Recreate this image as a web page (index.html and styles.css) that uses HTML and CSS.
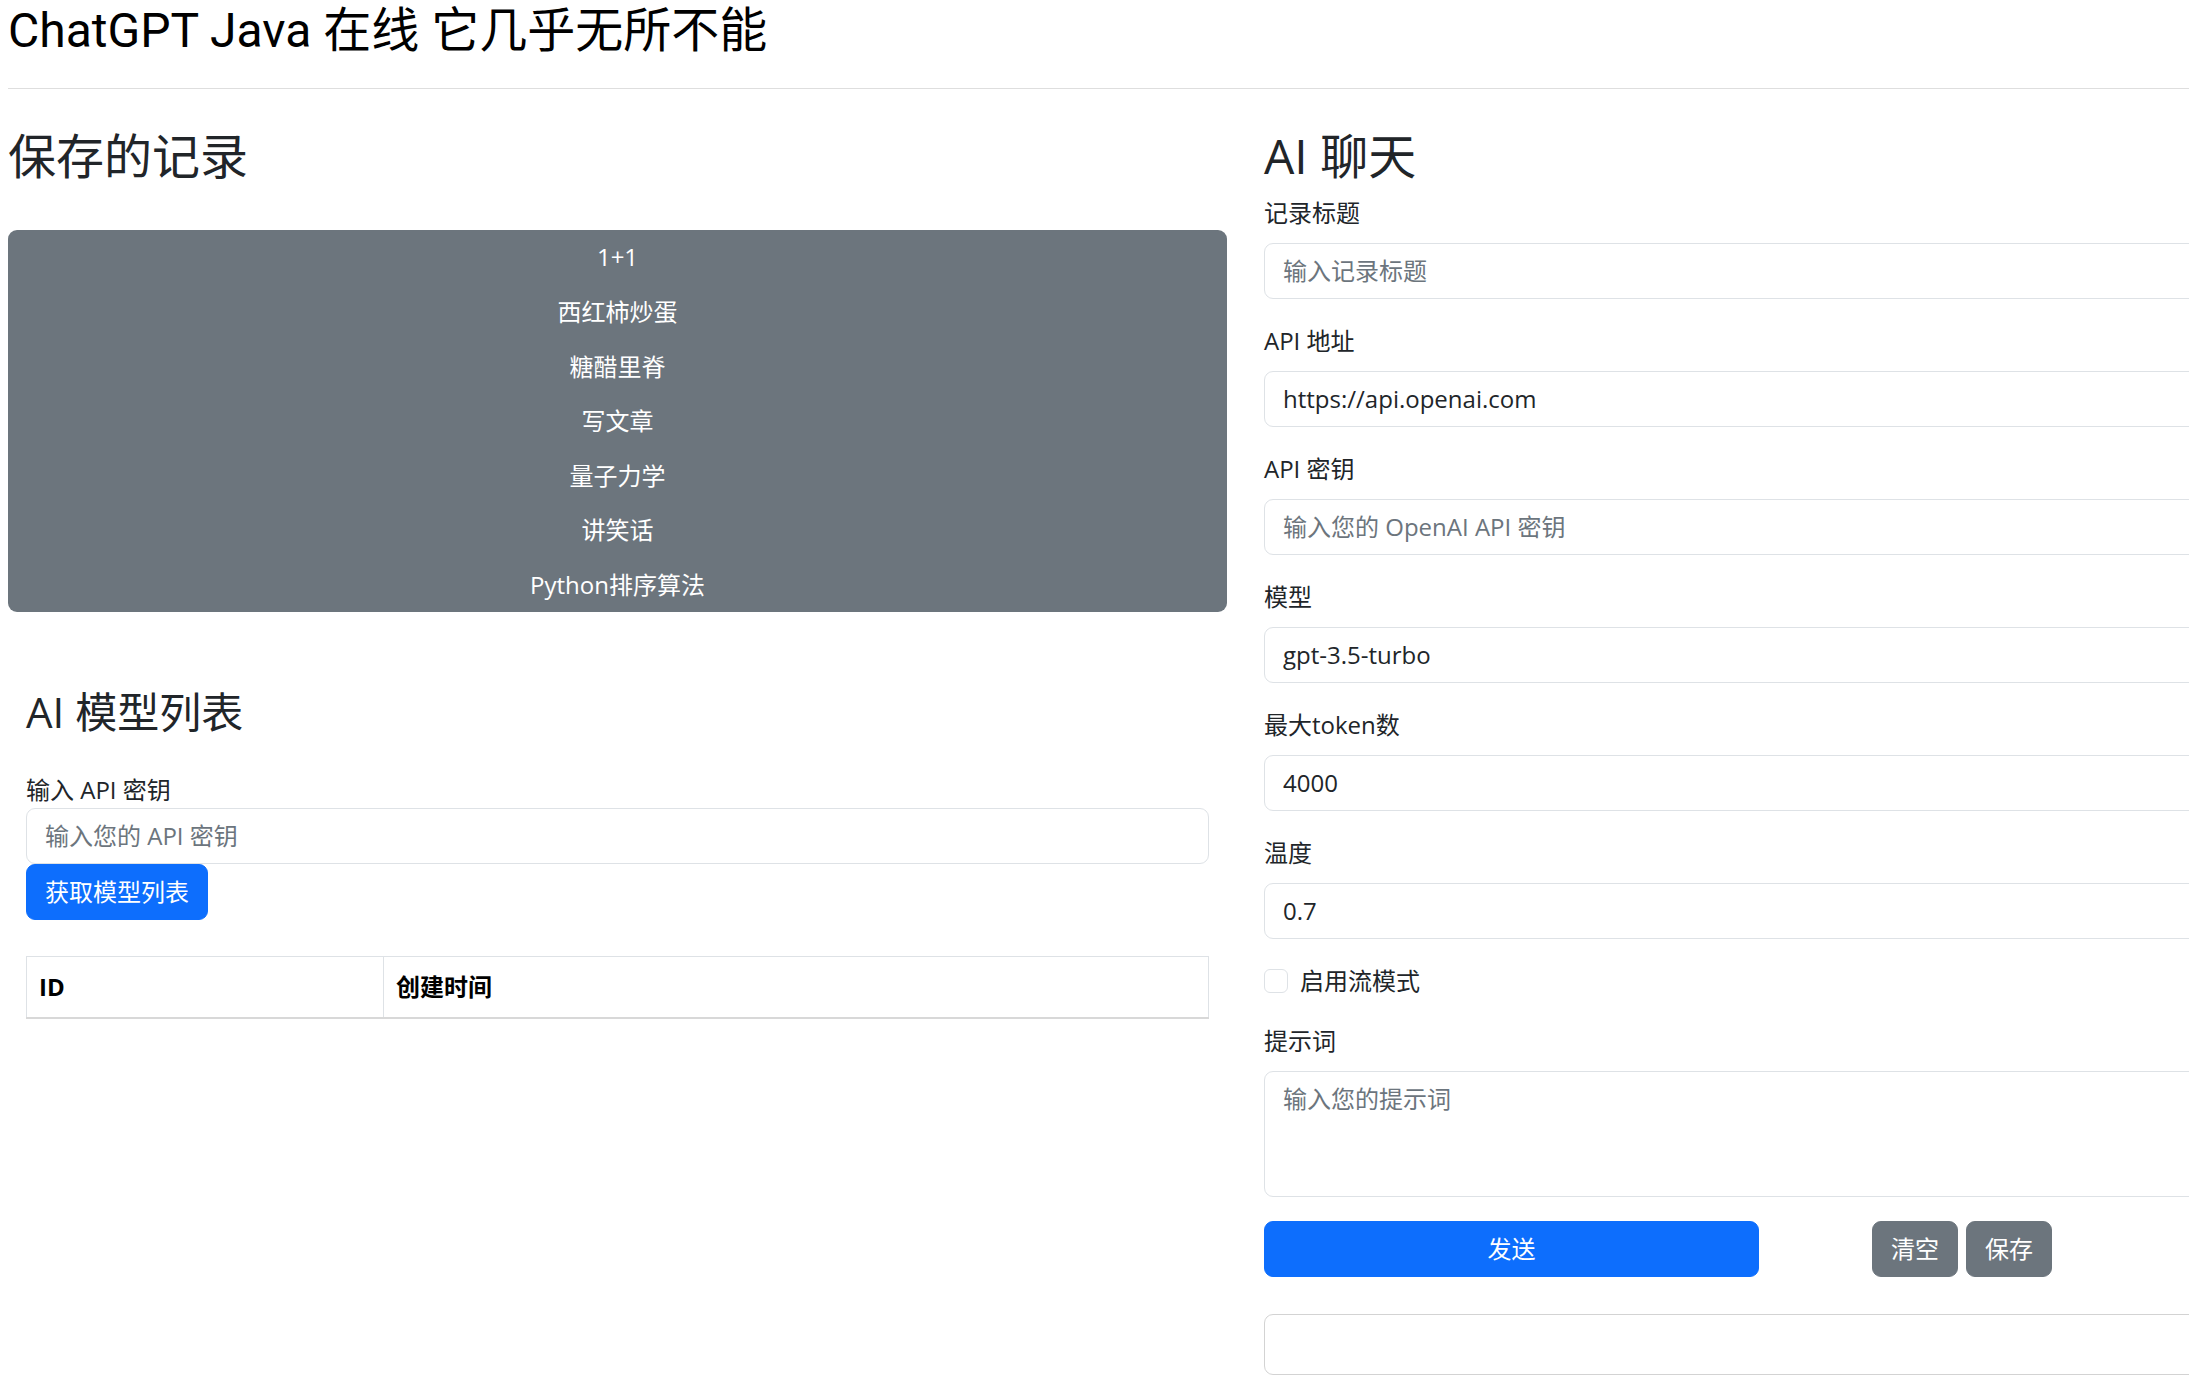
FILE: index.html
```html
<!DOCTYPE html>
<html lang="zh-CN">
<head>
<meta charset="UTF-8">
<meta name="viewport" content="width=device-width, initial-scale=1.0">
<title>ChatGPT Java 在线</title>
<link rel="stylesheet" href="styles.css">
</head>
<body>
<div class="page">
    <h1 class="site-title">ChatGPT Java 在线 它几乎无所不能</h1>
    <hr class="divider">

    <div class="layout">
        <!-- saved records + model list -->
        <div class="col">
            <h2 class="section-title">保存的记录</h2>
            <ul class="record-list">
                <li>1+1</li>
                <li>西红柿炒蛋</li>
                <li>糖醋里脊</li>
                <li>写文章</li>
                <li>量子力学</li>
                <li>讲笑话</li>
                <li>Python排序算法</li>
            </ul>

            <div class="models">
                <h3 class="models-title">AI 模型列表</h3>
                <label class="plain-label" for="modelKey">输入 API 密钥</label>
                <input class="field" id="modelKey" type="text" placeholder="输入您的 API 密钥">
                <button class="btn btn-primary">获取模型列表</button>
                <table class="model-table">
                    <thead>
                        <tr><th>ID</th><th>创建时间</th></tr>
                    </thead>
                    <tbody></tbody>
                </table>
            </div>
        </div>

        <!-- chat form -->
        <div class="col chat">
            <h2 class="section-title">AI 聊天</h2>

            <div class="field-group">
                <label class="field-label" for="title">记录标题</label>
                <input class="field" id="title" type="text" placeholder="输入记录标题">
            </div>
            <div class="field-group">
                <label class="field-label" for="apiUrl">API 地址</label>
                <input class="field" id="apiUrl" type="text" value="https://api.openai.com">
            </div>
            <div class="field-group">
                <label class="field-label" for="apiKey">API 密钥</label>
                <input class="field" id="apiKey" type="password" placeholder="输入您的 OpenAI API 密钥">
            </div>
            <div class="field-group">
                <label class="field-label" for="model">模型</label>
                <input class="field" id="model" type="text" value="gpt-3.5-turbo">
            </div>
            <div class="field-group">
                <label class="field-label" for="maxTokens">最大token数</label>
                <input class="field" id="maxTokens" type="text" value="4000">
            </div>
            <div class="field-group">
                <label class="field-label" for="temperature">温度</label>
                <input class="field" id="temperature" type="text" value="0.7">
            </div>

            <div class="stream-check">
                <input type="checkbox" id="stream">
                <label for="stream">启用流模式</label>
            </div>

            <div class="field-group">
                <label class="field-label" for="prompt">提示词</label>
                <textarea class="field prompt" id="prompt" placeholder="输入您的提示词"></textarea>
            </div>

            <div class="chat-actions">
                <div>
                    <button class="btn btn-primary send-btn">发送</button>
                </div>
                <div class="side-actions">
                    <button class="btn btn-secondary">清空</button>
                    <button class="btn btn-secondary">保存</button>
                </div>
            </div>

            <div class="chat-output"></div>
        </div>
    </div>
</div>
</body>
</html>
```

FILE: styles.css
```css
* {
    box-sizing: border-box;
}

html, body {
    margin: 0;
    padding: 0;
}

body {
    font-family: "Open Sans", "Noto Sans CJK SC", sans-serif;
    font-size: 24px;
    line-height: 36px;
    color: #212529;
    background: #fff;
    overflow-x: hidden;
}

.page {
    width: 2483px;
    padding: 0 0 0 8px;
}

.site-title {
    margin: 0;
    padding-top: 2px;
    font-family: Roboto, "Noto Sans CJK SC", sans-serif;
    font-size: 48px;
    line-height: 57.6px;
    font-weight: 400;
    color: #000;
}

.divider {
    margin: 28px 0 0;
    border: 0;
    border-top: 1px solid #dedede;
}

.layout {
    display: grid;
    grid-template-columns: 1219px 1219px;
    column-gap: 37px;
    margin-top: 38px;
}

.section-title {
    margin: 0 0 9.6px;
    font-size: 48px;
    line-height: 57.6px;
    font-weight: 400;
}

.chat .section-title {
    margin-bottom: 11px;
}

/* saved records */
.record-list {
    list-style: none;
    margin: 46px 0 0;
    padding: 0;
    background: #6c757d;
    border-radius: 9px;
    color: #fff;
    text-align: center;
}

.record-list li {
    padding: 9.3px 0;
    cursor: pointer;
}

/* model list */
.models {
    margin-top: 75px;
    padding: 0 18px;
}

.models-title {
    margin: 0 0 34px;
    font-size: 42px;
    line-height: 50.4px;
    font-weight: 400;
}

.plain-label {
    display: block;
}

.model-table {
    width: 100%;
    margin-top: 36px;
    border-collapse: collapse;
}

.model-table th {
    text-align: left;
    padding: 12px;
    border: 1px solid #dee2e6;
    border-bottom: 2px solid #d8d8d8;
    font-weight: 700;
    color: #000;
}

.model-table th:first-child {
    width: 357px;
}

/* form */
.field-group {
    margin-bottom: 24px;
}

.field-label {
    display: block;
    margin-bottom: 12px;
}

.field {
    display: block;
    width: 100%;
    padding: 9px 18px;
    font: inherit;
    color: #212529;
    background: #fff;
    border: 1px solid #dee2e6;
    border-radius: 9px;
    outline: none;
}

.field::placeholder {
    color: #6c757d;
}

.prompt {
    height: 126px;
    resize: vertical;
}

.stream-check {
    display: flex;
    align-items: flex-start;
    gap: 12px;
    height: 36px;
    margin-bottom: 24px;
}

.stream-check input {
    appearance: none;
    width: 24px;
    height: 24px;
    margin: 6px 0 0;
    border: 1px solid #dee2e6;
    border-radius: 6px;
    background: #fff;
}

.btn {
    font: inherit;
    padding: 9px 18px;
    border: 1px solid transparent;
    border-radius: 9px;
    color: #fff;
    cursor: pointer;
}

.btn-primary {
    background: #0d6efd;
    border-color: #0d6efd;
}

.btn-secondary {
    background: #6c757d;
    border-color: #6c757d;
}

.chat-actions {
    display: grid;
    grid-template-columns: 608px 1fr;
    margin-top: 3px;
}

.send-btn {
    width: 495px;
}

.side-actions {
    display: flex;
    gap: 8px;
}

.chat-output {
    margin-top: 37px;
    height: 61px;
    border: 1px solid #d3d3d3;
    border-radius: 9px;
}
```
